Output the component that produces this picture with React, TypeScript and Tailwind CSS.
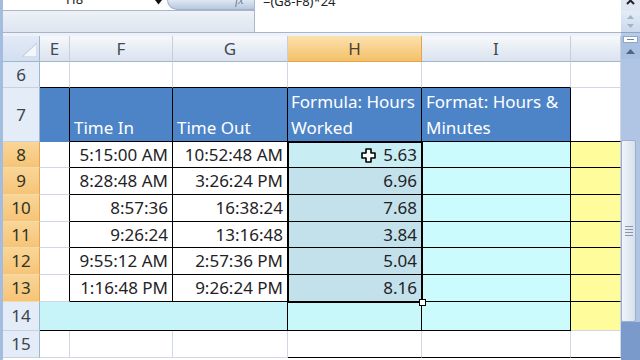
import React from "react";

const grid = "border-[#d0d7e5]";

const rows = [
  { n: 8, h: "h-[26px]", f: "5:15:00 AM", g: "10:52:48 AM", v: "5.63", hb: "bg-[#c8eef4]" },
  { n: 9, h: "h-[27px]", f: "8:28:48 AM", g: "3:26:24 PM", v: "6.96", hb: "bg-[#c3e1eb]" },
  { n: 10, h: "h-[27px]", f: "8:57:36", g: "16:38:24", v: "7.68", hb: "bg-[#c3e1eb]" },
  { n: 11, h: "h-[26px]", f: "9:26:24", g: "13:16:48", v: "3.84", hb: "bg-[#c3e1eb]" },
  { n: 12, h: "h-[27px]", f: "9:55:12 AM", g: "2:57:36 PM", v: "5.04", hb: "bg-[#c3e1eb]" },
  { n: 13, h: "h-[27px]", f: "1:16:48 PM", g: "9:26:24 PM", v: "8.16", hb: "bg-[#c3e1eb]" },
];

const RowHead = ({ n, hot }: { n: number; hot?: boolean }) => (
  <div
    className={`w-[37px] h-full shrink-0 flex items-center justify-center border-r border-b text-[17px] ${
      hot
        ? "bg-gradient-to-b from-[#f9d597] to-[#f6c477] border-r-[#e3a64f] border-b-[#f3dba8] text-[#33331f]"
        : "bg-[#e4ecf7] border-r-[#9eb6ce] border-b-[#c2d1e3] text-[#3a4550]"
    }`}
  >
    {n}
  </div>
);

const ColHead = ({ w, label, hot }: { w: string; label: string; hot?: boolean }) => (
  <div
    className={`${w} h-full shrink-0 flex items-center justify-center border-r border-b text-[17px] ${
      hot
        ? "bg-gradient-to-b from-[#fbe2ae] to-[#f4c068] border-r-[#e2a648] border-b-[#e2a648] text-[#4b4330]"
        : "bg-gradient-to-b from-[#f6f8fb] to-[#dbe3ee] border-r-[#c5d0de] border-b-[#9eb6ce] text-[#3f4b58]"
    }`}
  >
    {label}
  </div>
);

export default function App() {
  return (
    <div className="w-[640px] h-[360px] overflow-hidden relative bg-white flex font-['Noto_Sans',sans-serif] text-[#1e2326]">
      <div className="w-[3px] shrink-0 bg-[#a4bcdd]" />

      <div className="w-[618px] shrink-0 flex flex-col">
        {/* formula bar */}
        <div className="h-[33px] shrink-0 flex border-b border-[#a6b6ca]">
          <div className="w-[251px] shrink-0 flex flex-col">
            <div className="h-[11px] shrink-0 flex border-b border-[#a9b7c9]">
              <div className="w-[164px] shrink-0 bg-white relative overflow-hidden">
                <span className="absolute left-[63px] top-[-7px] text-[13px] leading-none text-[#222]">H8</span>
                <svg className="absolute left-[152px] top-[0px]" width="7" height="5" viewBox="0 0 7 5">
                  <path d="M0 0 H7 L3.5 4.5 Z" fill="#111" />
                </svg>
              </div>
              <div className="flex-1 relative overflow-hidden rounded-bl-[11px] border-l border-b border-[#9fb1c8] bg-gradient-to-b from-[#dfe8f4] to-[#b7c8de]">
                <span className="absolute left-[67px] top-[-6px] text-[12px] leading-none italic font-['Liberation_Serif',serif] text-[#6f7d8e]">fx</span>
              </div>
            </div>
            <div className="flex-1 bg-gradient-to-b from-[#eef2f8] to-[#dde5ef]" />
          </div>
          <div className="flex-1 bg-white border-l border-[#a9b7c9] relative overflow-hidden">
            <span className="absolute left-[8px] top-[-5px] text-[13px] leading-none text-[#222]">=(G8-F8)*24</span>
          </div>
        </div>
        <div className="h-[3px] shrink-0 bg-[#eef2f8]" />

        {/* sheet */}
        <div className="flex flex-col">
          <div className="h-[26px] flex">
            <div className="w-[37px] h-full shrink-0 border-r border-b border-r-[#9eb6ce] border-b-[#9eb6ce] bg-gradient-to-b from-[#e2eaf6] to-[#d3dff0] relative">
              <svg className="absolute left-[19px] top-[7px]" width="15" height="14" viewBox="0 0 15 14">
                <path d="M15 0 V14 H0 Z" fill="#f3f6fb" stroke="#b8c7da" strokeWidth="1" />
              </svg>
            </div>
            <ColHead w="w-[30px]" label="E" />
            <ColHead w="w-[103px]" label="F" />
            <ColHead w="w-[115px]" label="G" />
            <ColHead w="w-[134px]" label="H" hot />
            <ColHead w="w-[149px]" label="I" />
            <ColHead w="w-[50px]" label="" />
          </div>

          {/* row 6 */}
          <div className="h-[26px] flex">
            <RowHead n={6} />
            <div className={`w-[30px] shrink-0 border-r border-b ${grid} border-b-black`} />
            <div className={`w-[103px] shrink-0 border-r border-b ${grid} border-b-black`} />
            <div className={`w-[115px] shrink-0 border-r border-b ${grid} border-b-black`} />
            <div className={`w-[134px] shrink-0 border-r border-b ${grid} border-b-black`} />
            <div className={`w-[149px] shrink-0 border-r border-b ${grid} border-b-black`} />
            <div className={`w-[50px] shrink-0 border-r border-b ${grid}`} />
          </div>

          {/* row 7 */}
          <div className="h-[54px] flex text-white text-[17px] leading-[26px]">
            <RowHead n={7} />
            <div className="w-[30px] shrink-0 border-r border-b bg-[#4d84c8] border-r-black border-b-[#4d84c8]" />
            <div className="w-[103px] shrink-0 border-r border-b border-black bg-[#4d84c8] flex items-end pl-[4px]">Time In</div>
            <div className="w-[115px] shrink-0 border-r border-b border-black bg-[#4d84c8] flex items-end pl-[4px]">Time Out</div>
            <div className="w-[134px] shrink-0 border-r border-b border-black bg-[#4d84c8] flex items-end pl-[3px] whitespace-nowrap">
              <span>
                Formula: Hours
                <br />
                Worked
              </span>
            </div>
            <div className="w-[149px] shrink-0 border-r border-b border-black bg-[#4d84c8] flex items-end pl-[4px] whitespace-nowrap">
              <span>
                Format: Hours &amp;
                <br />
                Minutes
              </span>
            </div>
            <div className={`w-[50px] shrink-0 border-r border-b ${grid} border-b-black bg-white`} />
          </div>

          {/* rows 8-13 */}
          {rows.map((r) => (
            <div key={r.n} className={`${r.h} flex text-[17px]`}>
              <RowHead n={r.n} hot />
              <div className={`w-[30px] shrink-0 border-r border-b ${grid} border-r-black`} />
              <div className="w-[103px] shrink-0 border-r border-b border-black flex items-center justify-end pr-[4px]">{r.f}</div>
              <div className="w-[115px] shrink-0 border-r border-b border-black flex items-center justify-end pr-[4px]">{r.g}</div>
              <div className={`w-[134px] shrink-0 border-r border-b border-black ${r.hb} flex items-center justify-end pr-[4px]`}>{r.v}</div>
              <div className="w-[149px] shrink-0 border-r border-b border-black bg-[#cbfbfd]" />
              <div className={`w-[50px] shrink-0 border-r border-b ${grid} border-b-black bg-[#fffc9c]`} />
            </div>
          ))}

          {/* row 14 */}
          <div className="h-[29px] flex">
            <RowHead n={14} />
            <div className="w-[248px] shrink-0 border-r border-b border-black bg-[#c6f4f8]" />
            <div className="w-[134px] shrink-0 border-r border-b border-black bg-[#c9f8fb]" />
            <div className="w-[149px] shrink-0 border-r border-b border-black bg-[#cbfbfd]" />
            <div className={`w-[50px] shrink-0 border-r border-b ${grid} bg-[#fffc9c]`} />
          </div>

          {/* row 15 */}
          <div className="h-[27px] flex">
            <RowHead n={15} />
            <div className={`w-[30px] shrink-0 border-r border-b ${grid}`} />
            <div className={`w-[103px] shrink-0 border-r border-b ${grid}`} />
            <div className={`w-[115px] shrink-0 border-r border-b ${grid}`} />
            <div className={`w-[134px] shrink-0 border-r border-b ${grid} border-b-black`} />
            <div className={`w-[149px] shrink-0 border-r border-b ${grid} border-b-black`} />
            <div className={`w-[50px] shrink-0 border-r border-b ${grid} border-b-black`} />
          </div>
        </div>
      </div>

      {/* right strip / scrollbar */}
      <div className="w-[19px] shrink-0 flex flex-col bg-[#a9c0e0]">
        <div className="h-[11px] shrink-0 bg-[#dfe7f2] relative overflow-hidden">
          <svg className="absolute left-[5px] top-[-4px]" width="9" height="9" viewBox="0 0 9 9">
            <path d="M1 1 L8 8 M8 1 L1 8" stroke="#222" strokeWidth="2" />
          </svg>
        </div>
        <div className="h-[21px] shrink-0 bg-gradient-to-b from-[#e3ebf5] to-[#cbd9ec] flex flex-col items-center justify-center gap-[5px]">
          <svg width="7" height="4" viewBox="0 0 7 4">
            <path d="M0 4 L3.5 0 L7 4 Z" fill="#a3b3c8" />
          </svg>
          <svg width="7" height="4" viewBox="0 0 7 4">
            <path d="M0 0 L3.5 4 L7 0 Z" fill="#a3b3c8" />
          </svg>
        </div>
        <div className="h-[1px] shrink-0 bg-[#8ea4c2]" />
        <div className="h-[3px] shrink-0 bg-[#b8cbe5]" />
        <div className="h-[7px] shrink-0 mx-[2px] bg-white border border-[#8fa6c4] flex items-center justify-center">
          <div className="w-[7px] h-[1px] bg-[#6d829f]" />
        </div>
        <div className="h-[16px] shrink-0 flex items-center justify-center">
          <svg width="9" height="5" viewBox="0 0 9 5">
            <path d="M0 5 L4.5 0 L9 5 Z" fill="#4f6686" />
          </svg>
        </div>
        <div className="h-[81px] shrink-0 bg-[#b0c5e3]" />
        <div className="h-[182px] shrink-0 flex">
          <div className="w-[15px] h-full bg-gradient-to-r from-[#f2f5f9] to-[#d7e0ec] border border-[#9cb0ca] rounded-[2px] flex flex-col items-center justify-center gap-[2px]">
            <div className="w-[8px] h-[1px] bg-[#8696ac]" />
            <div className="w-[8px] h-[1px] bg-[#8696ac]" />
            <div className="w-[8px] h-[1px] bg-[#8696ac]" />
            <div className="w-[8px] h-[1px] bg-[#8696ac]" />
          </div>
          <div className="flex-1 bg-[#b0c5e3]" />
        </div>
        <div className="flex-1 bg-[#7a9acb]" />
      </div>

      {/* selection H8:H13 */}
      <div className="absolute left-[287px] top-[141px] w-[136px] h-[162px] border-2 border-black pointer-events-none" />
      <div className="absolute left-[419px] top-[299px] w-[7px] h-[7px] bg-white border border-black" />

      {/* cell cursor */}
      <svg className="absolute left-[361px] top-[148px]" width="15" height="15" viewBox="0 0 15 15">
        <path d="M5 1 H10 V5 H14 V10 H10 V14 H5 V10 H1 V5 H5 Z" fill="#fff" stroke="#000" strokeWidth="1.6" strokeLinejoin="round" />
      </svg>
    </div>
  );
}
